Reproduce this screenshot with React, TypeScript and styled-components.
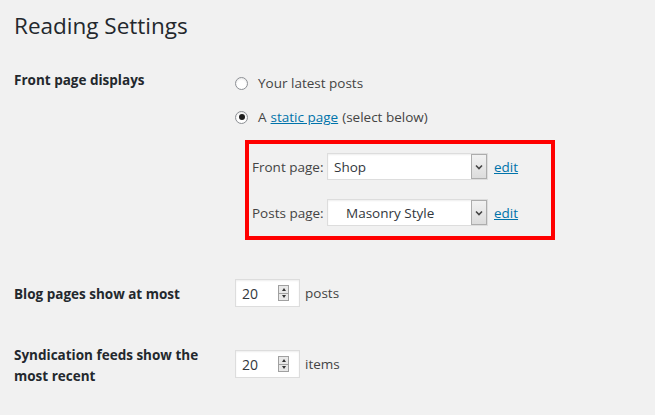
import React from 'react';
import styled, { createGlobalStyle } from 'styled-components';

const GlobalStyle = createGlobalStyle`
    html, body {
        margin: 0;
        padding: 0;
        background: #f1f1f1;
    }
    body {
        font-family: "Open Sans", "Noto Sans", sans-serif;
        font-size: 13.5px;
        color: #23282d;
    }
`;

const Page = styled.div`
    width: 655px;
    height: 415px;
    padding: 0 14px;
    box-sizing: border-box;
    overflow: hidden;
`;

const Title = styled.h1`
    margin: 0;
    padding-top: 11px;
    font-size: 22.5px;
    font-weight: 400;
    line-height: 30px;
    color: #23282d;
`;

const Row = styled.div<{ $top: number }>`
    display: flex;
    align-items: flex-start;
    margin-top: ${p => p.$top}px;
`;

const Th = styled.div<{ $pad?: number }>`
    width: 200px;
    margin-right: 21px;
    padding-top: ${p => p.$pad || 0}px;
    font-weight: 700;
    line-height: 21px;
    color: #23282d;
`;

const Td = styled.div<{ $pad?: number }>`
    flex: 1;
    display: flex;
    flex-direction: column;
    padding-top: ${p => p.$pad || 0}px;
`;

const RadioLine = styled.label<{ $gap?: number }>`
    display: flex;
    align-items: center;
    height: 20px;
    margin-top: ${p => p.$gap || 0}px;
    color: #444;
`;

const Radio = styled.span<{ $checked?: boolean }>`
    position: relative;
    width: 13px;
    height: 13px;
    box-sizing: border-box;
    border: 1px solid #8c8f94;
    border-radius: 50%;
    background: #fff;
    margin-right: 10px;
    box-shadow: inset 0 1px 2px rgba(0, 0, 0, 0.1);

    &::after {
        content: '';
        display: ${p => (p.$checked ? 'block' : 'none')};
        position: absolute;
        left: 2.5px;
        top: 2.5px;
        width: 6px;
        height: 6px;
        border-radius: 50%;
        background: #1e1e1e;
    }
`;

const Link = styled.a`
    color: #0073aa;
    text-decoration: underline;
    margin: 0 4px;
`;

const Highlight = styled.div`
    width: 310px;
    height: 100px;
    box-sizing: border-box;
    border: 4px solid #ff0000;
    margin: 13px 0 0 10px;
    padding: 9px 0 0 3px;
    display: flex;
    flex-direction: column;
    gap: 19px;
`;

const SelectRow = styled.div`
    display: flex;
    align-items: center;
    height: 27px;
`;

const SelectLabel = styled.span`
    width: 75px;
    color: #444;
`;

const Select = styled.div`
    width: 161px;
    height: 27px;
    box-sizing: border-box;
    border: 1px solid #ddd;
    background: #fff;
    display: flex;
    align-items: center;
    box-shadow: inset 0 1px 2px rgba(0, 0, 0, 0.07);
`;

const SelectValue = styled.span<{ $indent: number }>`
    flex: 1;
    padding-left: ${p => p.$indent}px;
    color: #32373c;
`;

const Arrow = styled.span`
    width: 16px;
    height: 25px;
    box-sizing: border-box;
    border: 1px solid #adadad;
    background: linear-gradient(#f2f2f2, #dcdcdc);
    display: flex;
    align-items: center;
    justify-content: center;
`;

const EditLink = styled.a`
    color: #0073aa;
    text-decoration: underline;
    margin-left: 6px;
`;

const NumberWrap = styled.div`
    display: flex;
    align-items: center;
`;

const NumberBox = styled.div`
    width: 65px;
    height: 28px;
    box-sizing: border-box;
    border: 1px solid #ddd;
    background: #fff;
    display: flex;
    align-items: center;
    padding-left: 6px;
    box-shadow: inset 0 1px 2px rgba(0, 0, 0, 0.07);
`;

const NumberValue = styled.span`
    flex: 1;
    font-size: 14px;
    color: #32373c;
`;

const Spinner = styled.span`
    width: 11px;
    height: 16px;
    margin-right: 10px;
    box-sizing: border-box;
    border: 1px solid #a0a0a0;
    background: #e8e8e8;
    display: flex;
    flex-direction: column;
`;

const SpinHalf = styled.span<{ $down?: boolean }>`
    flex: 1;
    display: flex;
    align-items: center;
    justify-content: center;
    border-top: ${p => (p.$down ? '1px solid #a0a0a0' : 'none')};

    &::before {
        content: '';
        width: 0;
        height: 0;
        border-left: 2.5px solid transparent;
        border-right: 2.5px solid transparent;
        ${p => (p.$down ? 'border-top: 3px solid #333;' : 'border-bottom: 3px solid #333;')}
    }
`;

const Unit = styled.span`
    margin-left: 5px;
    color: #444;
`;

const Chevron = () => (
    <svg width="8" height="6" viewBox="0 0 8 6">
        <path d="M1 1.5 L4 4.5 L7 1.5" fill="none" stroke="#444" strokeWidth="1.6" />
    </svg>
);

const NumberInput: React.FC<{ value: number; unit: string }> = ({ value, unit }) => (
    <NumberWrap>
        <NumberBox>
            <NumberValue>{value}</NumberValue>
            <Spinner>
                <SpinHalf />
                <SpinHalf $down />
            </Spinner>
        </NumberBox>
        <Unit>{unit}</Unit>
    </NumberWrap>
);

const PageSelect: React.FC<{ label: string; value: string; indent: number }> = ({ label, value, indent }) => (
    <SelectRow>
        <SelectLabel>{label}</SelectLabel>
        <Select>
            <SelectValue $indent={indent}>{value}</SelectValue>
            <Arrow>
                <Chevron />
            </Arrow>
        </Select>
        <EditLink>edit</EditLink>
    </SelectRow>
);

const App: React.FC = () => {
    return (
        <Page>
            <GlobalStyle />
            <Title>Reading Settings</Title>

            <Row $top={29}>
                <Th>Front page displays</Th>
                <Td $pad={3}>
                    <RadioLine>
                        <Radio />
                        Your latest posts
                    </RadioLine>
                    <RadioLine $gap={14}>
                        <Radio $checked />
                        A<Link>static page</Link>(select below)
                    </RadioLine>
                    <Highlight>
                        <PageSelect label="Front page:" value="Shop" indent={6} />
                        <PageSelect label="Posts page:" value="Masonry Style" indent={18} />
                    </Highlight>
                </Td>
            </Row>

            <Row $top={39}>
                <Th $pad={5}>Blog pages show at most</Th>
                <Td>
                    <NumberInput value={20} unit="posts" />
                </Td>
            </Row>

            <Row $top={38}>
                <Th>Syndication feeds show the most recent</Th>
                <Td $pad={5}>
                    <NumberInput value={20} unit="items" />
                </Td>
            </Row>
        </Page>
    );
};

export default App;
